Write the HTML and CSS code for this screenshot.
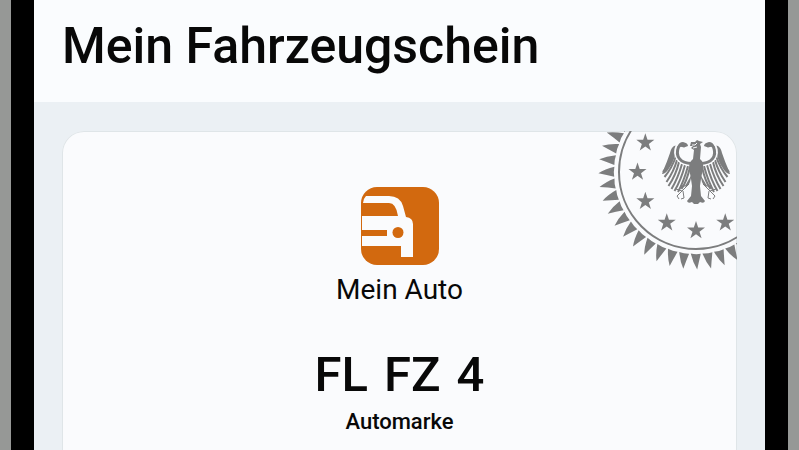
FILE: index.html
```html
<!DOCTYPE html>
<html lang="de">
<head>
<meta charset="utf-8">
<meta name="viewport" content="width=device-width, initial-scale=1">
<title>Mein Fahrzeugschein</title>
<link rel="stylesheet" href="styles.css">
</head>
<body>
<div class="phone">
  <header class="header"><h1 class="title">Mein Fahrzeugschein</h1></header>
  <main class="content">
    <article class="card">
      <svg class="seal" viewBox="-98 -98 196 196" aria-hidden="true">
        <defs>
          <path id="tooth" d="M-5.2 81.600Q0 82.600 4.800 81.800Q3 89 1.200 97.600Q-3 91-5.200 81.600Z"/>
          <path id="star" d="M0-9.500 2.200-3H9L3.500 1.200 5.600 7.800 0 3.800-5.600 7.800-3.500 1.200-9-3H-2.200Z"/>
          <g id="half">
            <path d="M20-23Q18-28 22-26Q25-24 26-19Q29-10 33-1L34 2Q31 2 28-2Q21-11 20-23Z"/>
            <path class="quill" d="M22-20Q25-9 33 0M20-16Q24-4 31.500 5M19-12Q22-1 29.500 10M17-10Q20 3 27.500 14M14-8Q18 6 24.500 17M11-7Q15 8 21.500 19M8-6Q12 9 18 20M6-5Q9 9 14.500 17"/>
            <path class="arm-gap" d="M11-26Q15-30 18-26C22-17 17-9 5-8"/>
            <path class="arm" d="M11-26Q15-29 17.500-25C21-16 16-8.500 4-8.500"/>
            <path d="M8-26Q8-29 13-30Q17-30 18-26L12-24.500Z"/>
            <path d="M4 2 11 14Q8 15 6 10Z"/>
            <path class="claw" d="M7 12 14 19 20 17M14 19 19 24 17 27M13 19 12 26 15 27M10 14 16 14"/>
          </g>
        </defs>
        <circle class="ring" r="77"/>
        <g id="teeth"></g>
        <g id="stars"></g>
        <use href="#half"/><use href="#half" transform="scale(-1 1)"/>
        <path d="M-3-13-2-22-5-24-3-26-6-26-5-30-1-30 1-32 3-31 7-30 4-28 5-25 4-13Q8-10 7-4L5 7 4 14 5 24 9 29Q8 32 4 30L2 32-2 32-4 30Q-8 32-9 29L-5 24-4 14-5 7-7-4Q-7-10-3-13Z"/>
        <path class="face" d="M-4-27H-1L1-29M-3-24 1-25"/>
      </svg>
      <svg class="car-icon" viewBox="0 0 78 78" aria-hidden="true">
        <rect class="tile" width="78" height="78" rx="16"/>
        <path class="car" d="M5 9H28Q39 9 42 19L45 30Q52 31 52 37V70H40V59H1V29H37Q35 16 28 16H2Q2 12 5 9Z"/>
        <path class="tile" d="M1 43H26V49H1Z"/><circle class="tile" cx="37" cy="45.500" r="5.500"/>
      </svg>
      <p class="name">Mein Auto</p>
      <p class="plate"><span>FL</span> <span>FZ</span> <span>4</span></p>
      <p class="brand">Automarke</p>
    </article>
  </main>
</div>
<script src="seal.js"></script>
</body>
</html>
```
FILE: styles.css
```css
* { box-sizing: border-box; }
body { margin: 0; background: #969896; color: #080808; font-family: Roboto, sans-serif; }
.phone { min-height: 100vh; margin: 0 11px; border: solid #000; border-width: 0 23px; background: #ebf0f4; display: flex; flex-direction: column; }
.header { padding: 16px 28px 26px; background: #fafcfe; }
.title { margin: 0; font-size: 50px; font-weight: 500; line-height: 60px; }
.content { flex: 1; display: flex; padding: 29px 28px 0; }
.card { position: relative; flex: 1; display: flex; flex-direction: column; align-items: center; padding: 56px 0 16px; overflow: hidden; border-radius: 22px 22px 0 0; background: #fafbfd; box-shadow: inset 0 0 0 1px #dfe5e8; }
.seal { position: absolute; top: -57px; right: -57px; width: 196px; height: 196px; fill: #7c7d7e; }
.ring { fill: none; stroke: #7c7d7e; stroke-width: 2; }
.quill { fill: none; stroke: #7c7d7e; stroke-width: 2; }
.arm { fill: none; stroke: #7c7d7e; stroke-width: 3; }
.arm-gap { fill: #fafbfd; stroke: #fafbfd; stroke-width: 5; }
.claw { fill: none; stroke: #7c7d7e; stroke-width: 1; }
.face { fill: none; stroke: #fafbfd; stroke-width: 1; }
.car-icon { width: 78px; height: 78px; }
.tile { fill: #d2690f; }
.car { fill: #fafbfd; }
.name { margin: 9px 0 0; font-size: 28px; line-height: 32px; }
.plate { display: flex; gap: 16px; margin: 39px 0 0; font-size: 49px; font-weight: 500; line-height: 60px; }
.brand { margin: 3px 0 0; font-size: 22px; font-weight: 500; line-height: 28px; }
```
FILE: seal.js
```js
const svgNamespace = "http://www.w3.org/2000/svg";
function addMark(groupId, shape, transform) {
  const use = document.createElementNS(svgNamespace, "use");
  use.setAttribute("href", shape);
  use.setAttribute("transform", transform);
  document.getElementById(groupId).append(use);
}
for (let i = 0; i < 44; i++) addMark("teeth", "#tooth", `rotate(${i * 360 / 44})`);
for (let i = 0; i < 12; i++) {
  const angle = i * Math.PI / 6;
  addMark("stars", "#star", `translate(${58.5 * Math.cos(angle)} ${58.5 * Math.sin(angle)})`);
}
```
